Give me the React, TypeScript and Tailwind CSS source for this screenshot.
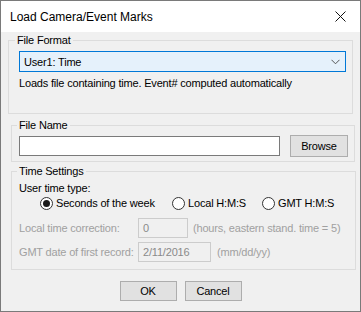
import React from "react";

function Group({
  title,
  className,
  legendClass,
  children,
}: {
  title: string;
  className: string;
  legendClass: string;
  children: React.ReactNode;
}) {
  return (
    <div className={`relative border border-[#dcdcdc] ${className}`}>
      <span
        className={`absolute top-[-8px] bg-[#f0f0f0] px-[2px] leading-[14px] text-black ${legendClass}`}
      >
        {title}
      </span>
      {children}
    </div>
  );
}

function Radio({ checked, label, className }: { checked?: boolean; label: string; className: string }) {
  return (
    <div className={`flex items-center ${className}`}>
      <div className="flex h-[13px] w-[13px] items-center justify-center rounded-full border border-[#333333] bg-white">
        {checked && <div className="h-[7px] w-[7px] rounded-full bg-[#1a1a1a]" />}
      </div>
      <span className="ml-[3px] leading-[14px] text-black">{label}</span>
    </div>
  );
}

export default function App() {
  return (
    <div
      className="flex h-[312px] w-[361px] flex-col border border-[#7a7a7a] bg-[#f0f0f0] text-[11px] tracking-[-0.18px] text-black"
      style={{ fontFamily: '"Liberation Sans", Arial, sans-serif' }}
    >
      {/* Title bar */}
      <div className="flex h-[31px] shrink-0 items-center justify-between bg-white pl-[9px] pr-[12px]">
        <span className="text-[12px] leading-[16px] tracking-[0px] text-black">
          Load Camera/Event Marks
        </span>
        <svg width="11" height="11" viewBox="0 0 11 11" className="mr-[2px]">
          <path d="M0.5 0.5 L10.5 10.5 M10.5 0.5 L0.5 10.5" stroke="#111" strokeWidth="1" fill="none" />
        </svg>
      </div>

      {/* File Format */}
      <Group title="File Format" className="ml-[7px] mt-[8px] h-[74px] w-[345px]" legendClass="left-[6px]">
        <div className="ml-[10px] mt-[10px] flex h-[21px] w-[327px] items-center justify-between border border-[#0078d7] bg-[#e5f1fb] pl-[4px] pr-[5px]">
          <span className="leading-[14px]">User1: Time</span>
          <svg width="9" height="6" viewBox="0 0 9 6">
            <path d="M0.5 0.8 L4.5 4.8 L8.5 0.8" stroke="#555" strokeWidth="1" fill="none" />
          </svg>
        </div>
        <div className="ml-[10px] mt-[4px] leading-[14px]">
          Loads file containing time. Event# computed automatically
        </div>
      </Group>

      {/* File Name */}
      <Group title="File Name" className="ml-[10px] mt-[11px] h-[37px] w-[344px]" legendClass="left-[5px]">
        <div className="ml-[7px] mt-[9px] flex h-[22px] items-center">
          <div className="h-[20px] w-[261px] border border-[#7a7a7a] bg-white" />
          <div className="ml-[10px] flex h-[22px] w-[58px] items-center justify-center border border-[#adadad] bg-[#e1e1e1] leading-[14px]">
            Browse
          </div>
        </div>
      </Group>

      {/* Time Settings */}
      <Group title="Time Settings" className="ml-[10px] mt-[9px] h-[99px] w-[345px]" legendClass="left-[5px]">
        <div className="ml-[7px] mt-[9px] leading-[14px]">User time type:</div>
        <div className="ml-[28px] mt-[1px] flex h-[14px] items-center">
          <Radio checked label="Seconds of the week" className="w-[132px]" />
          <Radio label="Local H:M:S" className="w-[90px]" />
          <Radio label="GMT H:M:S" className="w-[80px]" />
        </div>
        <div className="ml-[7px] mt-[8px] flex h-[20px] items-center text-[#a0a0a0]">
          <span className="w-[119px] leading-[14px]">Local time correction:</span>
          <div className="flex h-[20px] w-[50px] items-center border border-[#cccccc] bg-[#f0f0f0] pl-[4px] text-[#8a8a8a]">
            0
          </div>
          <span className="ml-[5px] leading-[14px]">(hours, eastern stand. time = 5)</span>
        </div>
        <div className="ml-[7px] mt-[4px] flex h-[20px] items-center text-[#a0a0a0]">
          <span className="w-[119px] leading-[14px]">GMT date of first record:</span>
          <div className="flex h-[20px] w-[73px] items-center border border-[#cccccc] bg-[#f0f0f0] pl-[4px] text-[#8a8a8a]">
            2/11/2016
          </div>
          <span className="ml-[6px] leading-[14px]">(mm/dd/yy)</span>
        </div>
      </Group>

      {/* Buttons */}
      <div className="mt-[11px] flex justify-center gap-[8px]">
        <div className="flex h-[20px] w-[57px] items-center justify-center border border-[#adadad] bg-[#e1e1e1]">OK</div>
        <div className="flex h-[20px] w-[57px] items-center justify-center border border-[#adadad] bg-[#e1e1e1]">Cancel</div>
      </div>
    </div>
  );
}
